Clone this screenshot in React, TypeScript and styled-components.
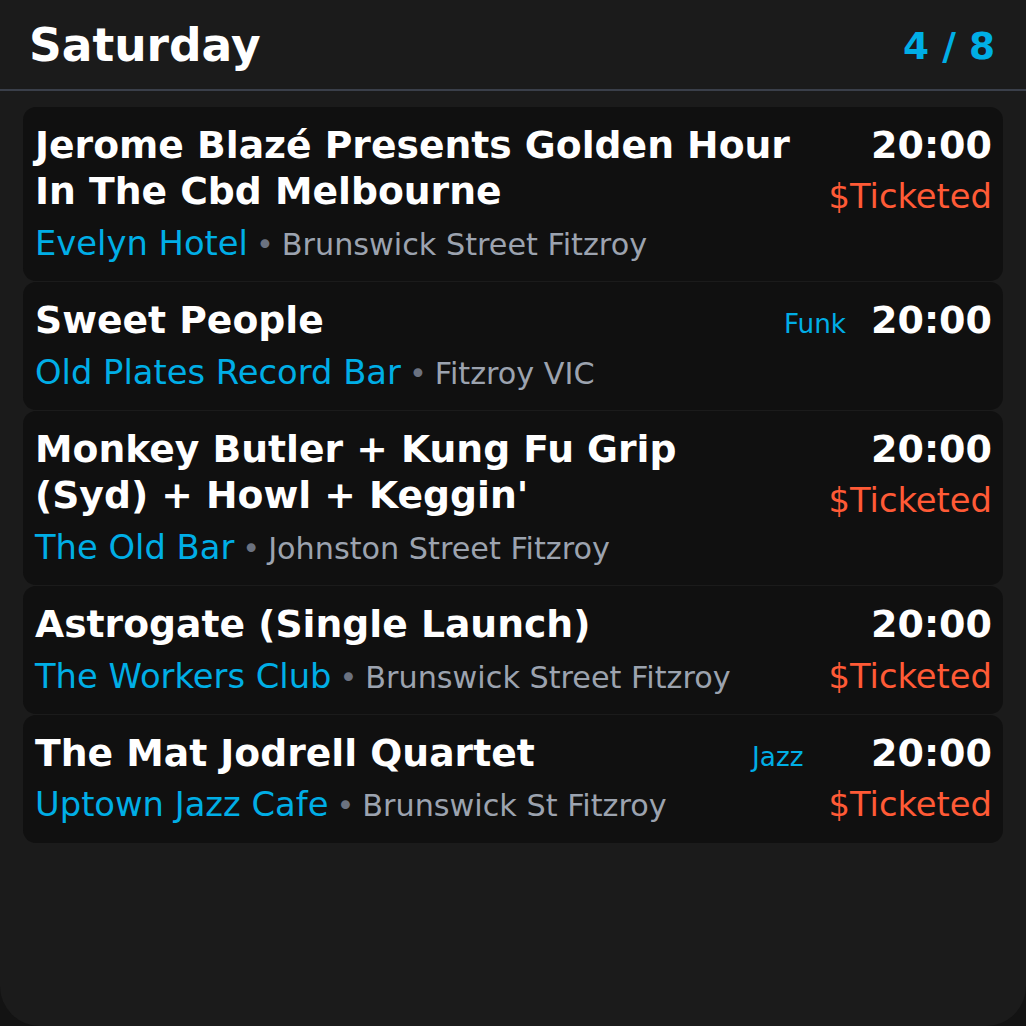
import React from "react";
import styled, { createGlobalStyle } from "styled-components";

const Global = createGlobalStyle`
  html, body { margin: 0; padding: 0; background: #131313; }
  body { font-family: "DejaVu Sans", "Liberation Sans", sans-serif; }
  * { box-sizing: border-box; }
`;

const Panel = styled.div`
  width: 1026px;
  height: 1026px;
  background: #1b1b1b;
  border-radius: 0 0 40px 40px;
  overflow: hidden;
  display: flex;
  flex-direction: column;
`;

const Header = styled.header`
  display: flex;
  align-items: center;
  justify-content: space-between;
  padding: 18px 31px 15px 29px;
  border-bottom: 2px solid #3a3f4a;
`;

const DayTitle = styled.h1`
  margin: 0;
  font-size: 45.5px;
  line-height: 56px;
  font-weight: 700;
  color: #ffffff;
`;

const Counter = styled.div`
  font-size: 37.5px;
  line-height: 1.25;
  font-weight: 700;
  color: #00aee6;
`;

const List = styled.div`
  display: flex;
  flex-direction: column;
  gap: 1px;
  padding: 16px 23px 0;
`;

const Card = styled.div`
  display: flex;
  align-items: flex-start;
  gap: 25px;
  padding: 15px 11px 15px 12px;
  background: #101010;
  border-radius: 13px;
`;

const Main = styled.div`
  flex: 1;
  min-width: 0;
  display: flex;
  flex-direction: column;
  gap: 8px;
`;

const TitleRow = styled.div`
  display: flex;
  align-items: baseline;
  gap: 16px;
`;

const Title = styled.div`
  flex: 1;
  padding-right: 4px;
  font-size: 37.7px;
  line-height: 46.4px;
  font-weight: 700;
  color: #ffffff;
`;

const Genre = styled.span`
  font-size: 26.25px;
  color: #00aee6;
  white-space: nowrap;
`;

const VenueLine = styled.div`
  font-size: 30.25px;
  line-height: 42.4px;
  color: #9ca3af;
  white-space: nowrap;
`;

const Venue = styled.span`
  font-size: 33.75px;
  color: #00aee6;
`;

const Dot = styled.span`
  color: #6b7280;
  margin: 0 8px;
`;

const Side = styled.div`
  display: flex;
  flex-direction: column;
  align-items: flex-end;
  gap: 8px;
`;

const Time = styled.div`
  font-size: 38px;
  line-height: 46.4px;
  font-weight: 700;
  color: #ffffff;
`;

const Price = styled.div`
  font-size: 33.75px;
  line-height: 42.4px;
  color: #ff5a36;
`;

type Gig = {
  title: string;
  venue: string;
  address: string;
  time: string;
  genre?: string;
  ticketed?: boolean;
};

const gigs: Gig[] = [
  {
    title: "Jerome Blazé Presents Golden Hour In The Cbd Melbourne",
    venue: "Evelyn Hotel",
    address: "Brunswick Street Fitzroy",
    time: "20:00",
    ticketed: true,
  },
  {
    title: "Sweet People",
    venue: "Old Plates Record Bar",
    address: "Fitzroy VIC",
    time: "20:00",
    genre: "Funk",
  },
  {
    title: "Monkey Butler + Kung Fu Grip (Syd) + Howl + Keggin'",
    venue: "The Old Bar",
    address: "Johnston Street Fitzroy",
    time: "20:00",
    ticketed: true,
  },
  {
    title: "Astrogate (Single Launch)",
    venue: "The Workers Club",
    address: "Brunswick Street Fitzroy",
    time: "20:00",
    ticketed: true,
  },
  {
    title: "The Mat Jodrell Quartet",
    venue: "Uptown Jazz Cafe",
    address: "Brunswick St Fitzroy",
    time: "20:00",
    genre: "Jazz",
    ticketed: true,
  },
];

export default function App() {
  return (
    <>
      <Global />
      <Panel>
        <Header>
          <DayTitle>Saturday</DayTitle>
          <Counter>4 / 8</Counter>
        </Header>
        <List>
          {gigs.map((g, i) => (
            <Card key={i}>
              <Main>
                <TitleRow>
                  <Title>{g.title}</Title>
                  {g.genre && <Genre>{g.genre}</Genre>}
                </TitleRow>
                <VenueLine>
                  <Venue>{g.venue}</Venue>
                  <Dot>•</Dot>
                  {g.address}
                </VenueLine>
              </Main>
              <Side>
                <Time>{g.time}</Time>
                {g.ticketed && <Price>$Ticketed</Price>}
              </Side>
            </Card>
          ))}
        </List>
      </Panel>
    </>
  );
}
